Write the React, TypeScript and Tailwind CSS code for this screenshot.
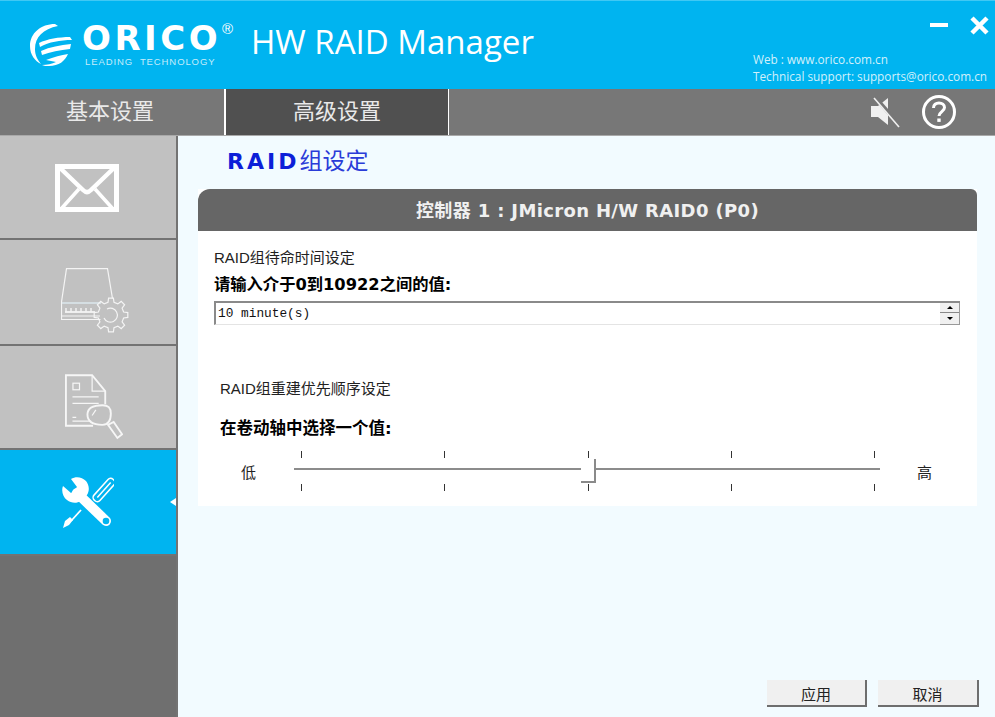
const cjk = "font-['Liberation_Sans','Noto_Sans_CJK_SC',sans-serif]"

// outline of a gear, used by the disk icon
function gearPath(cx: number, cy: number, teeth: number, outer: number, inner: number) {
  const pts: string[] = []
  const step = (Math.PI * 2) / teeth
  for (let i = 0; i < teeth; i++) {
    const a = i * step
    const offsets: [number, number][] = [
      [-0.3, inner],
      [-0.18, outer],
      [0.18, outer],
      [0.3, inner],
    ]
    for (const [o, r] of offsets) {
      const t = a + o * step
      pts.push(`${(cx + Math.cos(t) * r).toFixed(1)} ${(cy + Math.sin(t) * r).toFixed(1)}`)
    }
  }
  return `M${pts.join("L")}Z`
}

function LogoMark() {
  return (
    <svg width="44" height="44" viewBox="0 0 44 44" fill="none">
      <path d="M26 1C12 1 1 10 1 23c0 9 5 15 11 18-4-5-6-9-6-15C6 14 14 6 29 3z" fill="#fff" />
      <path d="M10 20c8-4 20-6 31-6l2 3c-12 0-23 2-32 7z" fill="#fff" />
      <path d="M12 28c9-4 19-6 30-7l-1 5c-10 1-20 3-28 6z" fill="#fff" />
      <path d="M17 37c8-3 15-5 22-6-3 7-9 12-19 12-3 0-5 0-7-1 5 0 10-1 14-3-3-1-7-1-10-2z" fill="#fff" />
    </svg>
  )
}

function MuteIcon() {
  return (
    <svg width="32" height="32" viewBox="0 0 32 32" fill="none">
      <path d="M2 10h7l10-8v27L9 21H2z" fill="#f0f0f0" />
      <path d="M6 1l25 29" stroke="#777" strokeWidth="4" />
      <path d="M5 2l25 29" stroke="#f0f0f0" strokeWidth="1.6" />
    </svg>
  )
}

function HelpIcon() {
  return (
    <svg width="36" height="36" viewBox="0 0 36 36" fill="none">
      <circle cx="18" cy="18" r="15.5" stroke="#fff" strokeWidth="3" />
      <path d="M12.5 14c0-3.300 2.400-5 5.500-5s5.500 1.700 5.500 4.500c0 4-5.500 4.200-5.500 8.500" stroke="#fff" strokeWidth="3" />
      <rect x="16.300" y="24.500" width="3.400" height="3.400" fill="#fff" />
    </svg>
  )
}

function MailIcon() {
  return (
    <svg width="64" height="48" viewBox="0 0 64 48" fill="none" stroke="#fff">
      <rect x="2.500" y="2.500" width="59" height="43" strokeWidth="5" />
      <path d="M4 3l24 23q4 4 8 0L60 3" strokeWidth="4.500" />
      <path d="M6 45l18-20M58 45L40 25" strokeWidth="3.500" />
    </svg>
  )
}

function DiskIcon() {
  return (
    <svg width="69" height="65" viewBox="0 0 69 65" fill="none" stroke="#f4f4f4" strokeWidth="1.200">
      <path d="M0.500 34L5.500 0.600h41l5 30" />
      <path d="M0.500 34v17.500h39" />
      <path d="M1 35h39" stroke="#dbe7ec" strokeWidth="1.600" />
      <path d="M1 48h38" />
      <path d="M4 44h30" strokeWidth="1.800" />
      <path d="M5 44v-4M10 44v-4M15 44v-4M20 44v-4M25 44v-4M30 44v-4" strokeWidth="1.400" />
      <path d={gearPath(50, 47, 8, 17, 13)} />
      <path d="M46 41a7 7 0 1 1-3 9" />
    </svg>
  )
}

function ReportIcon() {
  return (
    <svg width="58" height="68" viewBox="0 0 62 72" fill="none" stroke="#f6f6f6">
      <path d="M30 55H1V1h28l14 17v14" strokeWidth="2" />
      <path d="M29 1v17h14" strokeWidth="1.300" />
      <rect x="8.500" y="9.500" width="7" height="7" strokeWidth="1.300" />
      <path d="M8 24h28M8 31h28M8 46h4M8 50h20" strokeWidth="1.300" />
      <path d="M24 43c0-7 7-10 16-10 6 0 9 2 9 9 0 8-3 12-9 12-10 0-16-3-16-11z" strokeWidth="2" />
      <path d="M33 38l-4 6" strokeWidth="1.300" />
      <path d="M46 54l6-3 9 13-5 4z" strokeWidth="2" />
    </svg>
  )
}

function ToolsIcon() {
  return (
    <svg width="52" height="52" viewBox="0 0 52 52" fill="none">
      {/* wrench */}
      <path d="M15 16l29 28" stroke="#fff" strokeWidth="10" strokeLinecap="round" />
      <path d="M1 9l8 7 6-6-6-8c5-3 11-2 15 2 3 4 4 9 1 14l-6 6c-5 3-10 2-14-1C1 20-1 14 1 9z" fill="#fff" />
      <circle cx="44" cy="44" r="3.300" fill="#00b4f0" />
      {/* screwdriver */}
      <g transform="rotate(42 42 13)">
        <rect x="38" y="-1" width="8" height="28" rx="3.500" stroke="#fff" strokeWidth="1.500" />
        <path d="M42 3v20" stroke="#fff" strokeWidth="1.500" />
      </g>
      <path d="M19 33L9 44" stroke="#fff" strokeWidth="1.800" />
      <path d="M1 51l2-7 5-4 3 3-4 5z" fill="#fff" />
    </svg>
  )
}

function SideItem({ h, active, children }: { h: string; active?: boolean; children: React.ReactNode }) {
  return (
    <div className={`${h} relative flex items-center justify-center border-b-2 border-[#737373] ${active ? "bg-[#00b4f0]" : "bg-[#c1c1c1]"}`}>
      {children}
      {active && <div className="absolute right-0 top-[48px] h-0 w-0 border-y-[4px] border-r-[6px] border-y-transparent border-r-white" />}
    </div>
  )
}

function Ticks() {
  return (
    <div className="flex h-[7px] justify-between pl-[7px] pr-[5px]">
      {[0, 1, 2, 3, 4].map((i) => (
        <div key={i} className="h-full w-px bg-[#333]" />
      ))}
    </div>
  )
}

function ActionButton({ label, className }: { label: string; className: string }) {
  return (
    <button className={`h-[27px] border-r-2 border-b-2 border-[#6e6e6e] bg-[#f0f0f0] text-[15px] leading-[30px] text-[#222] ${className}`}>
      {label}
    </button>
  )
}

export default function App() {
  return (
    <div className={`flex h-[717px] w-[995px] flex-col overflow-hidden bg-[#f2fbff] ${cjk}`}>
      {/* top banner */}
      <div className="flex h-[89px] shrink-0 border-t border-[#40c8f4] bg-[#00b4f0] text-white">
        <div className="ml-[29px] mt-[22px]"><LogoMark /></div>
        <div className="ml-[9px] mt-[20px] flex w-[148px] flex-col">
          <div className="relative h-[34px] font-['DejaVu_Sans',sans-serif] text-[34px] font-bold leading-[34px] tracking-[3.500px]">
            ORICO
            <span className="absolute left-[140px] top-[-2px] font-['Liberation_Sans',sans-serif] text-[15px] font-normal leading-[20px] tracking-normal">®</span>
          </div>
          <div className="ml-[3px] mt-[1px] font-['Liberation_Sans',sans-serif] text-[9.500px] leading-[11px] tracking-[0.900px] whitespace-nowrap text-[#c5ecfb]">
            LEADING&nbsp; TECHNOLOGY
          </div>
        </div>
        <div className="ml-[21px] mt-[19px] font-['Open_Sans',sans-serif] text-[33px] leading-[44px] whitespace-nowrap">HW RAID Manager</div>
        <div className="ml-auto flex w-[242px] flex-col">
          <div className="mr-[6px] mt-[12px] flex h-[24px] items-center justify-end gap-[22px]">
            <div className="h-[4px] w-[18px] bg-white" />
            <svg width="19" height="19" viewBox="0 0 19 19"><path d="M2 2l15 15M17 2L2 17" stroke="#fff" strokeWidth="4.500" /></svg>
          </div>
          <div className="mt-[14px] font-['Open_Sans',sans-serif] text-[11.800px] leading-[17px] whitespace-nowrap text-[#d2f0fb]">
            <div>Web : www.orico.com.cn</div>
            <div>Technical support: supports@orico.com.cn</div>
          </div>
        </div>
      </div>

      {/* tab bar */}
      <div className="flex h-[47px] shrink-0 border-b border-[#a9a9a9] bg-[#777777] text-[22px] text-[#e9e9e9]">
        <div className="flex w-[224px] items-center justify-center pr-[4px] pb-[1px]">基本设置</div>
        <div className="flex w-[225px] items-center justify-center border-x border-x-white bg-[#505050] pb-[1px] [border-left-width:2px]">高级设置</div>
        <div className="ml-auto mr-[38px] flex items-center gap-[20px]">
          <MuteIcon />
          <HelpIcon />
        </div>
      </div>

      <div className="flex min-h-0 flex-1">
        {/* left side */}
        <div className="flex w-[178px] shrink-0 flex-col border-r-2 border-[#737373] bg-[#6f6f6f]">
          <SideItem h="h-[104px]"><div className="mt-[2px] mr-[2px]"><MailIcon /></div></SideItem>
          <SideItem h="h-[106px]"><div className="ml-[14px] mt-[16px]"><DiskIcon /></div></SideItem>
          <SideItem h="h-[104px]"><div className="ml-[12px] mt-[22px]"><ReportIcon /></div></SideItem>
          <SideItem h="h-[106px]" active><div className="mt-[2px]"><ToolsIcon /></div></SideItem>
        </div>

        {/* main area */}
        <div className="flex min-w-0 flex-1 flex-col pl-[20px] pr-[18px]">
          <div className="mt-[11px] ml-[29px] h-[28px] font-['DejaVu_Sans','Noto_Sans_CJK_SC',sans-serif] text-[22px] leading-[28px] font-bold tracking-[3px] text-[#0d1fd8]">
            RAID<span className="text-[23px] font-normal tracking-normal text-[#2a3cd8]">组设定</span>
          </div>
          <div className="mt-[14px] flex flex-col bg-white">
            <div className="flex h-[42px] items-center justify-center rounded-tl-[12px] rounded-tr-[6px] bg-[#666666] pt-[1px] font-['DejaVu_Sans','Noto_Sans_CJK_SC',sans-serif] text-[18px] font-bold tracking-[0.350px] whitespace-pre text-[#f0f0f0]">
              控制器 1 : JMicron H/W RAID0 (P0)
            </div>
            <div className="h-[275px] pl-[16px] pr-[17px]">
              <div className="mt-[17px] text-[15px] leading-[20px] text-[#222]">RAID组待命时间设定</div>
              <div className="mt-[7px] font-['DejaVu_Sans','Noto_Sans_CJK_SC',sans-serif] text-[16.300px] leading-[20px] font-bold text-black">请输入介于0到10922之间的值:</div>
              <div className="mt-[6px] flex h-[24px] items-center border-t-2 border-l-2 border-b border-[#8a8a8a] border-b-[#e4e4e4] pl-[2px]">
                <span className="flex-1 font-['Liberation_Mono',monospace] text-[12.800px] text-[#111]">10 minute(s)</span>
                <div className="flex h-[22px] w-[20px] flex-col justify-center gap-px border-r border-b border-[#999] bg-[#f0f0f0]">
                  <div className="flex h-[10px] items-center justify-center border-b border-[#888]"><div className="h-0 w-0 border-x-[3px] border-b-[3px] border-x-transparent border-b-black" /></div>
                  <div className="flex h-[10px] items-center justify-center"><div className="h-0 w-0 border-x-[3px] border-t-[3px] border-x-transparent border-t-black" /></div>
                </div>
              </div>

              <div className="ml-[6px] mt-[54px] text-[15px] leading-[20px] text-[#222]">RAID组重建优先顺序设定</div>
              <div className="ml-[6px] mt-[20px] font-['DejaVu_Sans','Noto_Sans_CJK_SC',sans-serif] text-[16.500px] leading-[20px] font-bold text-black">在卷动轴中选择一个值:</div>
              <div className="mt-[12px] flex items-center text-[15px] text-[#222]">
                <span className="ml-[27px] mt-[5px] w-[53px]">低</span>
                <div className="relative flex h-[40px] w-[586px] flex-col">
                  <Ticks />
                  <div className="mt-[10px] h-[2px] w-full bg-[#8c8c8c]" />
                  <div className="mt-[14px]"><Ticks /></div>
                  <div className="absolute left-[287px] top-[8px] h-[24px] w-[15px] border-r-2 border-b-2 border-[#8a8a8a] bg-white" />
                </div>
                <span className="ml-[37px] mt-[5px]">高</span>
              </div>
            </div>
          </div>
          <div className="mr-[-2px] mt-[174px] flex justify-end gap-[11px]">
            <ActionButton label="应用" className="w-[100px]" />
            <ActionButton label="取消" className="w-[101px]" />
          </div>
        </div>
      </div>
    </div>
  )
}
